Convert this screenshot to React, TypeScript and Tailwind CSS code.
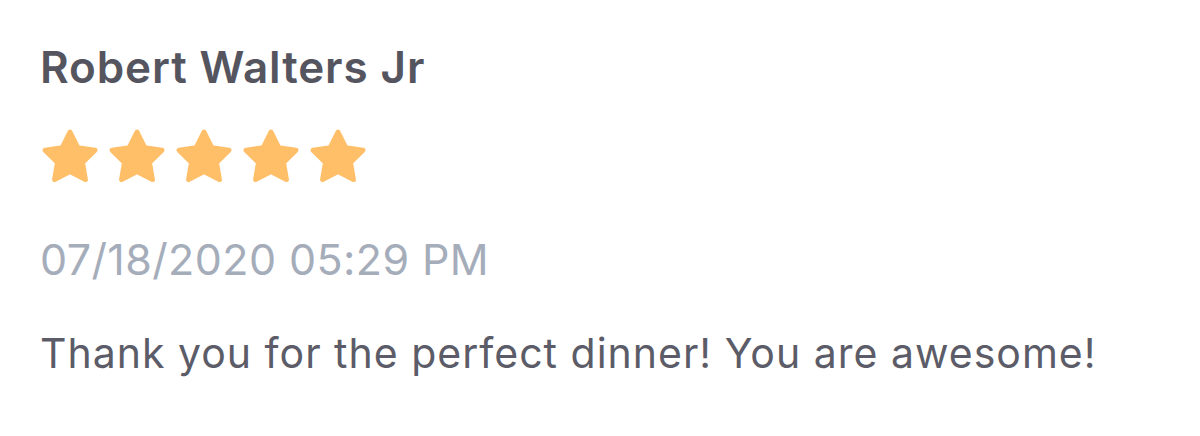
import React from "react";

function Star() {
  return (
    <svg width="60" height="60" viewBox="0 0 24 24" className="block">
      <polygon
        points="12,2 15.09,8.26 22,9.27 17,14.14 18.18,21.02 12,17.77 5.82,21.02 7,14.14 2,9.27 8.91,8.26"
        fill="#FFBF69"
        stroke="#FFBF69"
        strokeWidth="2"
        strokeLinejoin="round"
      />
    </svg>
  );
}

export default function App() {
  return (
    <div className="w-[1200px] h-[436px] bg-white pl-[40px] pt-[37px]" style={{ fontFamily: "Inter, 'Noto Sans', sans-serif" }}>
      <div className="text-[44px] leading-[60px] font-semibold text-[#55555f] tracking-[0.9px]">Robert Walters Jr</div>
      <div className="flex gap-[7px] mt-[30px] -ml-[0.5px]">
        {[0, 1, 2, 3, 4].map((i) => (
          <Star key={i} />
        ))}
      </div>
      <div className="mt-[42px] text-[43px] leading-[60px] text-[#a5adba] tracking-[0.4px]">07/18/2020 05:29 PM</div>
      <div className="mt-[34px] text-[41px] leading-[60px] text-[#5c5c68] tracking-[1px]">Thank you for the perfect dinner! You are awesome!</div>
    </div>
  );
}
